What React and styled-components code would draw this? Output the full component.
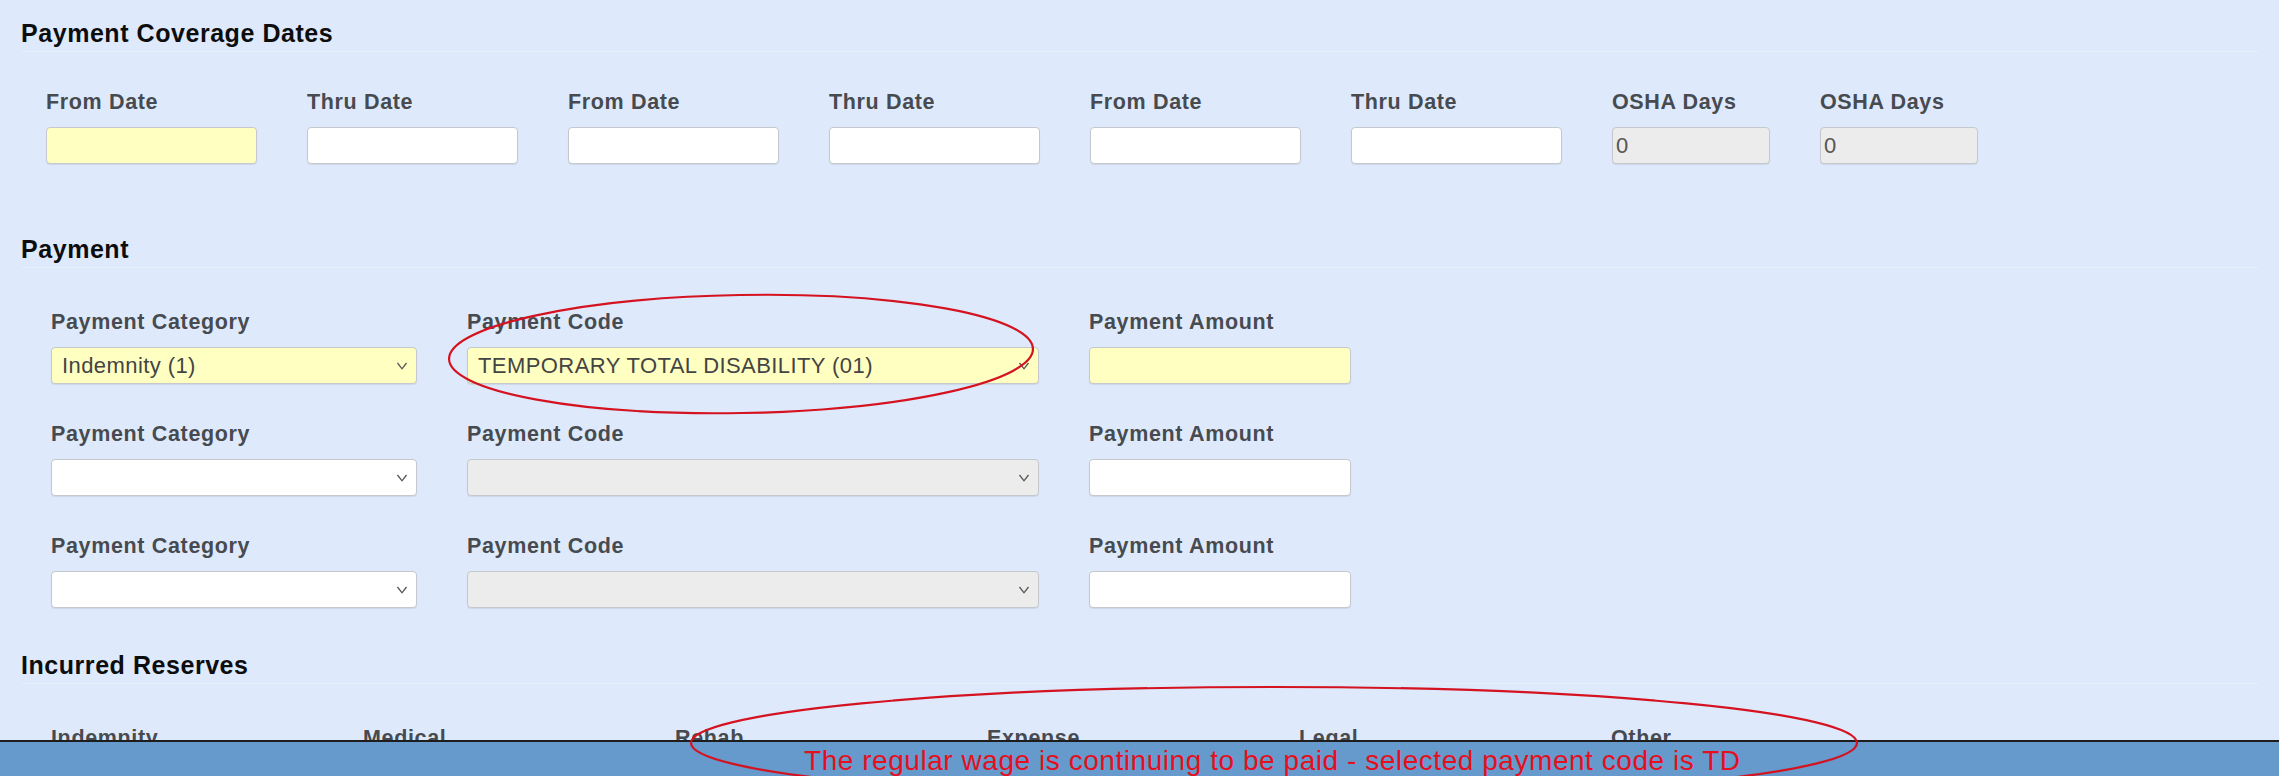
import React from "react";
import styled, { createGlobalStyle } from "styled-components";

const GlobalStyle = createGlobalStyle`
  html, body {
    margin: 0;
    padding: 0;
    overflow: hidden;
    background: #deeafc;
  }
  body {
    font-family: "Liberation Sans", Arial, sans-serif;
  }
`;

const Page = styled.div`
  position: relative;
  height: 776px;
  overflow: hidden;
  box-sizing: border-box;
  padding: 19px 20px 0 21px;
  background: #deeafc;
`;

const Legend = styled.h2`
  margin: 0;
  padding: 0 0 4px;
  font-size: 25px;
  line-height: 28px;
  letter-spacing: 0.55px;
  font-weight: 700;
  color: #0d0d0d;
  border-bottom: 1px solid #e8eef6;
`;

const FieldRow = styled.div`
  display: flex;
  gap: 50px;
  margin-left: ${(p) => p.$indent}px;
`;

const Group = styled.div`
  display: flex;
  flex-direction: column;
  gap: 38px;
  padding-top: ${(p) => p.$top}px;
  padding-bottom: ${(p) => p.$bottom}px;
`;

const Field = styled.div`
  display: flex;
  flex-direction: column;
  width: ${(p) => p.$w}px;
`;

const Label = styled.label`
  display: block;
  margin-bottom: 13px;
  font-size: 21.5px;
  line-height: 24px;
  letter-spacing: 0.65px;
  font-weight: 700;
  color: #474b50;
  white-space: nowrap;
`;

const fieldBg = (p) =>
  p.$required ? "#ffffc2" : p.disabled ? "#ececec" : "#ffffff";

const TextInput = styled.input`
  box-sizing: border-box;
  width: 100%;
  height: 37px;
  padding: 0 3px;
  border: 1px solid #c5c8cc;
  border-radius: 4px;
  box-shadow: 0 1px 1px rgba(0, 0, 0, 0.08);
  background: ${fieldBg};
  font-family: inherit;
  font-size: 22px;
  letter-spacing: 0.4px;
  color: #555;
  outline: none;
`;

const SelectWrap = styled.div`
  position: relative;
  width: 100%;
`;

const Select = styled.select`
  appearance: none;
  box-sizing: border-box;
  width: 100%;
  height: 37px;
  padding: 0 30px 0 10px;
  border: 1px solid #c5c8cc;
  border-radius: 4px;
  box-shadow: 0 1px 1px rgba(0, 0, 0, 0.08);
  background: ${fieldBg};
  font-family: inherit;
  font-size: 22px;
  letter-spacing: 0.42px;
  color: #444;
  outline: none;
  opacity: 1;
`;

const Chevron = styled.svg`
  position: absolute;
  right: 9px;
  top: 15px;
  pointer-events: none;
`;

const StatusBar = styled.div`
  position: fixed;
  left: 0;
  right: 0;
  bottom: 0;
  z-index: 5;
  height: 36px;
  box-sizing: border-box;
  padding: 2px 0 0 804px;
  border-top: 2px solid #1d1d1d;
  background: #6699cc;
  overflow: hidden;
  white-space: nowrap;
  font-size: 28px;
  line-height: 34px;
  letter-spacing: 0.55px;
  color: #e3101e;
`;

const Marks = styled.svg`
  position: fixed;
  left: 0;
  top: 0;
  z-index: 10;
  pointer-events: none;
`;

function DropDown({ value, required, disabled }) {
  return (
    <SelectWrap>
      <Select $required={required} disabled={disabled} defaultValue={value || ""}>
        <option value={value || ""}>{value || ""}</option>
      </Select>
      <Chevron width="12" height="8" viewBox="0 0 12 8">
        <polyline points="1.5,1 6,6.8 10.5,1" fill="none" stroke="#555" strokeWidth="1.3" />
      </Chevron>
    </SelectWrap>
  );
}

const dates = [
  { label: "From Date", required: true },
  { label: "Thru Date" },
  { label: "From Date" },
  { label: "Thru Date" },
  { label: "From Date" },
  { label: "Thru Date" },
];

const payments = [
  { category: "Indemnity (1)", code: "TEMPORARY TOTAL DISABILITY (01)", first: true },
  {},
  {},
];

const reserves = ["Indemnity", "Medical", "Rehab", "Expense", "Legal", "Other"];

export default function App() {
  return (
    <>
      <GlobalStyle />
      <Page>
        <Legend>Payment Coverage Dates</Legend>
        <Group $top={38} $bottom={71}>
          <FieldRow $indent={25}>
            {dates.map((d, i) => (
              <Field key={i} $w={211}>
                <Label>{d.label}</Label>
                <TextInput $required={d.required} defaultValue="" />
              </Field>
            ))}
            <Field $w={158}>
              <Label>OSHA Days</Label>
              <TextInput disabled defaultValue="0" />
            </Field>
            <Field $w={158}>
              <Label>OSHA Days</Label>
              <TextInput disabled defaultValue="0" />
            </Field>
          </FieldRow>
        </Group>

        <Legend>Payment</Legend>
        <Group $top={42} $bottom={43}>
          {payments.map((p, i) => (
            <FieldRow key={i} $indent={30}>
              <Field $w={366}>
                <Label>Payment Category</Label>
                <DropDown value={p.category} required={p.first} />
              </Field>
              <Field $w={572}>
                <Label>Payment Code</Label>
                <DropDown value={p.code} required={p.first} disabled={!p.first} />
              </Field>
              <Field $w={262}>
                <Label>Payment Amount</Label>
                <TextInput $required={p.first} defaultValue="" />
              </Field>
            </FieldRow>
          ))}
        </Group>

        <Legend>Incurred Reserves</Legend>
        <Group $top={42} $bottom={0}>
          <FieldRow $indent={30}>
            {reserves.map((r) => (
              <Field key={r} $w={262}>
                <Label>{r}</Label>
                <TextInput defaultValue="" />
              </Field>
            ))}
          </FieldRow>
        </Group>
      </Page>

      <StatusBar>The regular wage is continuing to be paid - selected payment code is TD</StatusBar>

      <Marks width="2279" height="776" viewBox="0 0 2279 776">
        <ellipse
          cx="741"
          cy="354"
          rx="292"
          ry="59"
          fill="none"
          stroke="#d5121f"
          strokeWidth="2.2"
          transform="rotate(-1 741 354)"
        />
        <ellipse cx="1274" cy="743" rx="583" ry="56" fill="none" stroke="#d5121f" strokeWidth="2.2" />
      </Marks>
    </>
  );
}
